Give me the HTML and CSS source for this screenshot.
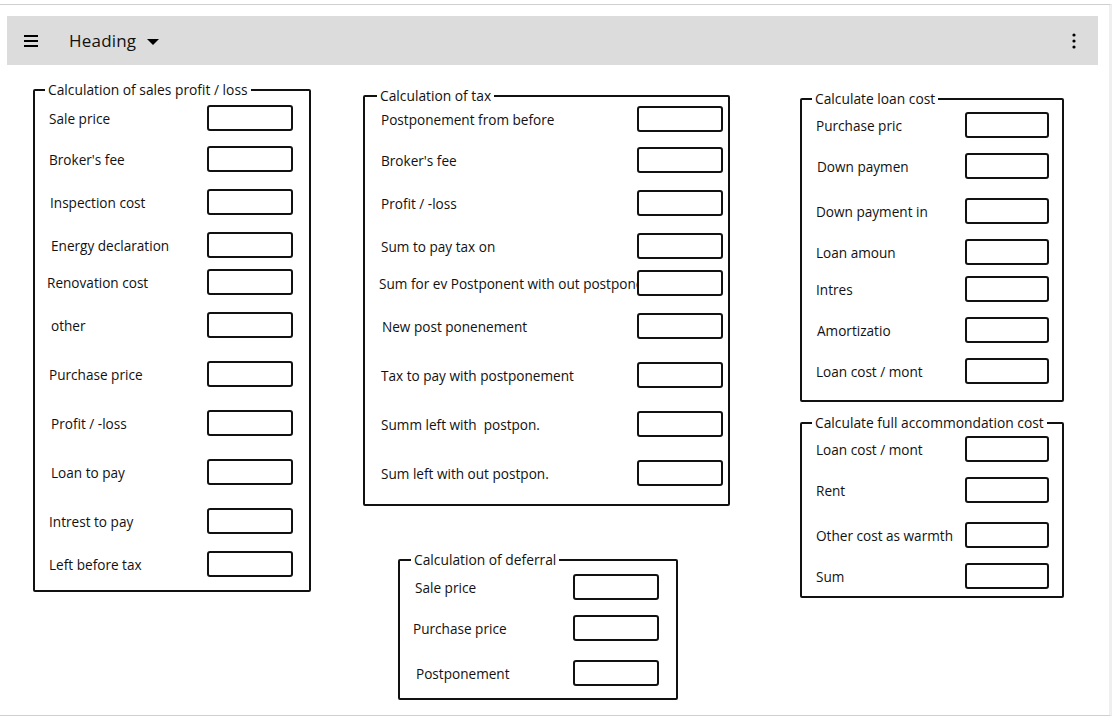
FILE: index.html
```html
<!DOCTYPE html>
<html lang="en">
<head>
<meta charset="UTF-8">
<meta name="viewport" content="width=device-width, initial-scale=1.0">
<title>Sales calculator</title>
<link rel="stylesheet" href="styles.css">
</head>
<body>

<div class="frame">
    <div class="header">
        <span class="menu-icon">
            <svg width="16" height="14" viewBox="0 0 16 14">
                <path d="M1 2h14M1 7h14M1 12h14" stroke="#000" stroke-width="2"/>
            </svg>
        </span>
        <span class="heading">Heading</span>
        <span class="caret"></span>
        <span class="kebab">
            <svg width="4" height="16" viewBox="0 0 4 16">
                <circle cx="2" cy="2" r="1.6" fill="#000"/>
                <circle cx="2" cy="8" r="1.6" fill="#000"/>
                <circle cx="2" cy="14" r="1.6" fill="#000"/>
            </svg>
        </span>
    </div>

    <div class="board">
        <div class="col col-left">
            <fieldset class="box box-sales">
                <legend>Calculation of sales profit / loss</legend>
                <div class="row"><label>Sale price</label><input></div>
                <div class="row tight"><label>Broker's fee</label><input></div>
                <div class="row"><label class="nudge">Inspection cost</label><input></div>
                <div class="row"><label class="nudge2">Energy declaration</label><input></div>
                <div class="row close"><label class="pull">Renovation cost</label><input></div>
                <div class="row"><label class="nudge2">other</label><input></div>
                <div class="row wide"><label>Purchase price</label><input></div>
                <div class="row wide"><label class="nudge2">Profit / -loss</label><input></div>
                <div class="row wide"><label class="nudge2">Loan to pay</label><input></div>
                <div class="row wide"><label>Intrest to pay</label><input></div>
                <div class="row"><label>Left before tax</label><input></div>
            </fieldset>
        </div>

        <div class="col col-mid">
            <fieldset class="box box-tax">
                <legend>Calculation of tax</legend>
                <div class="row"><label>Postponement from before</label><input></div>
                <div class="row tight"><label>Broker's fee</label><input></div>
                <div class="row"><label>Profit / -loss</label><input></div>
                <div class="row"><label>Sum to pay tax on</label><input></div>
                <div class="row close"><label class="pull">Sum for ev Postponent with out postpone</label><input></div>
                <div class="row"><label class="nudge">New post ponenement</label><input></div>
                <div class="row wide"><label>Tax to pay with postponement</label><input></div>
                <div class="row wide"><label>Summ left with&nbsp; postpon.</label><input></div>
                <div class="row wide"><label>Sum left with out postpon.</label><input></div>
            </fieldset>

            <fieldset class="box box-deferral">
                <legend>Calculation of deferral</legend>
                <div class="row"><label>Sale price</label><input></div>
                <div class="row tight"><label class="pull">Purchase price</label><input></div>
                <div class="row wider"><label class="nudge">Postponement</label><input></div>
            </fieldset>
        </div>

        <div class="col col-right">
            <fieldset class="box box-loan">
                <legend>Calculate loan cost</legend>
                <div class="row"><label>Purchase pric</label><input></div>
                <div class="row tight"><label class="nudge">Down paymen</label><input></div>
                <div class="row wider"><label>Down payment in</label><input></div>
                <div class="row tight"><label>Loan amoun</label><input></div>
                <div class="row close"><label>Intres</label><input></div>
                <div class="row tight"><label class="nudge">Amortizatio</label><input></div>
                <div class="row tight"><label>Loan cost / mont</label><input></div>
            </fieldset>

            <fieldset class="box box-full">
                <legend>Calculate full accommondation cost</legend>
                <div class="row"><label>Loan cost / mont</label><input></div>
                <div class="row tight"><label>Rent</label><input></div>
                <div class="row wider"><label>Other cost as warmth</label><input></div>
                <div class="row tight"><label>Sum</label><input></div>
            </fieldset>
        </div>
    </div>
</div>

</body>
</html>
```

FILE: styles.css
```css
body {
    margin: 0;
    font-family: "Open Sans", "Noto Sans", sans-serif;
    color: #111;
    background: #fff;
}
.frame {
    box-sizing: border-box;
    width: 1112px;
    height: 712px;
    margin-top: 4px;
    border-top: 1px solid #cfcfcf;
    border-bottom: 1px solid #cfcfcf;
    border-right: 3px solid #efefef;
}
.header {
    display: flex;
    align-items: center;
    height: 49px;
    margin: 11px 11px 0 7px;
    padding: 0 16px;
    background-color: #dcdcdc;
}
.menu-icon {
    display: flex;
    width: 16px;
    margin-right: 30px;
}
.heading {
    font-size: 17px;
    letter-spacing: 0.2px;
}
.caret {
    width: 0;
    height: 0;
    margin: 2px 0 0 11px;
    border-left: 6px solid transparent;
    border-right: 6px solid transparent;
    border-top: 6px solid #000;
}
.kebab {
    display: flex;
    margin-left: auto;
    margin-right: 6px;
}

.board {
    display: flex;
    align-items: flex-start;
}
.col {
    display: flex;
    flex-direction: column;
    align-items: flex-start;
}
.col-left {
    margin: 17px 0 0 33px;
}
.col-mid {
    margin: 23px 0 0 52px;
}
.col-right {
    margin: 26px 0 0 70px;
}

.box {
    box-sizing: border-box;
    margin: 0;
    min-width: 0;
    border: 2px solid #111;
    border-radius: 2px;
}
.box legend {
    margin-left: -4px;
    padding: 0 3px;
    font-size: 13.8px;
    line-height: 16px;
    white-space: nowrap;
}
.box-sales {
    width: 278px;
    padding: 7px 16px 13px 14px;
}
.box-tax {
    width: 367px;
    padding: 2px 5px 18px 16px;
}
.box-deferral {
    width: 280px;
    margin: 46px 0 0 35px;
    padding: 6px 17px 12px 15px;
}
.box-loan {
    width: 264px;
    padding: 5px 13px 16px 14px;
}
.box-full {
    width: 264px;
    margin-top: 13px;
    padding: 5px 13px 7px 14px;
}

.row {
    display: flex;
    align-items: center;
    margin-top: 17px;
    font-size: 13.6px;
}
.row:first-of-type {
    margin-top: 0;
}
.row.tight {
    margin-top: 15px;
}
.row.close {
    margin-top: 11px;
}
.row.wide {
    margin-top: 23px;
}
.row.wider {
    margin-top: 19px;
}
.row label {
    flex: 1;
    min-width: 0;
    white-space: nowrap;
}
.row label.nudge {
    padding-left: 1px;
}
.row label.nudge2 {
    padding-left: 2px;
}
.row label.pull {
    margin-left: -2px;
}
.row input {
    box-sizing: border-box;
    width: 86px;
    height: 26px;
    border: 2px solid #111;
    border-radius: 3px;
    background: #fff;
}
.box-loan .row input,
.box-full .row input {
    width: 84px;
}
```
